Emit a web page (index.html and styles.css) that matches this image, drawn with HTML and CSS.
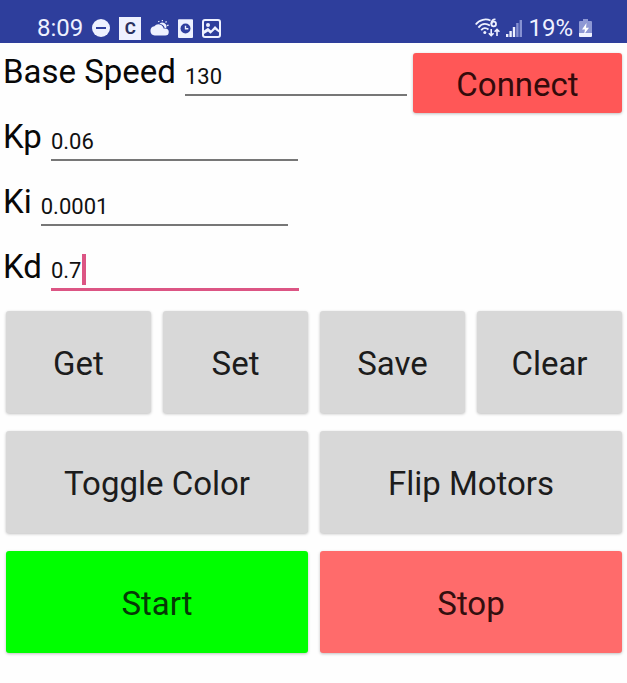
FILE: index.html
```html
<!DOCTYPE html>
<html lang="en">
<head>
<meta charset="utf-8">
<meta name="viewport" content="width=device-width, initial-scale=1">
<title>Motor Controller</title>
<link rel="stylesheet" href="styles.css">
</head>
<body>
<header class="status-bar">
  <div class="status-group">
    <span class="status-text">8:09</span>
    <svg class="icon" width="18" height="18" viewBox="0 0 18 18" aria-hidden="true">
      <circle cx="9" cy="9" r="9" fill="#eef1ff"/>
      <path d="M4 9h10" stroke="#303f9f" stroke-width="2"/>
    </svg>
    <span class="app-badge">C</span>
    <svg class="icon" width="19" height="18" viewBox="0 0 20 18" aria-hidden="true">
      <path d="M5 17a5 5 0 0 1-.4-9.900A5.500 5.500 0 0 1 14.300 9.500H16a3.750 3.750 0 0 1 0 7.500z" fill="#eef1ff"/>
      <path d="M10 4.600a4.200 4.200 0 0 1 7 4.400h-1.500a6.500 6.500 0 0 0-5.500-4.400z" fill="#eef1ff"/>
      <path d="M9.500 2.800 9 1.600M13 2V.5M16.400 3.200l1-1.200M18 6.500l1.500-.5" stroke="#eef1ff" stroke-width="1.300"/>
    </svg>
    <svg class="icon" width="15" height="19" viewBox="0 0 16 20" aria-hidden="true">
      <rect width="16" height="20" rx="1" fill="#eef1ff"/>
      <circle cx="8" cy="10" r="5.300" fill="#303f9f"/>
      <path d="M8 7v3.200h3" fill="none" stroke="#eef1ff" stroke-width="1.500"/>
    </svg>
    <svg class="icon" width="19" height="19" viewBox="0 0 19 19" aria-hidden="true">
      <rect x="1" y="1" width="17" height="17" rx="2" fill="none" stroke="#eef1ff" stroke-width="2"/>
      <circle cx="6" cy="6" r="2" fill="#eef1ff"/>
      <path d="M2 11.500 6 8.800l3 2.700L13 7l4 4v2.500l-4-3-4.500 4.200L6 12.500l-4 2.500z" fill="#eef1ff"/>
    </svg>
  </div>
  <div class="status-group status-right">
    <svg class="icon" width="25" height="20" viewBox="0 0 25 20" aria-hidden="true">
      <g fill="none" stroke="#eef1ff" stroke-width="1.800">
        <path d="M.7 6.500C4.500 1.300 11 .5 15.500 2.500M3.400 9.600C6.500 5.600 11 5 15 7.500M6.200 12.300C8 9.800 11 9.500 13.500 11.500"/>
        <circle cx="18.700" cy="6" r="2.300"/>
        <path d="M20.500 1.500c-2-.5-4.100 1-4.100 4.500"/>
        <path d="M16.200 11v6.500M13.800 15.200l2.400 2.400 2.400-2.400M22 18v-6.500M19.600 13.800l2.400-2.400 2.400 2.400" stroke-width="1.600"/>
      </g>
      <circle cx="9.800" cy="14.500" r="1.500" fill="#eef1ff"/>
    </svg>
    <svg class="icon" width="16" height="17" viewBox="0 0 16 17" aria-hidden="true">
      <path d="M0 14h2.400v3H0zM3.400 11h2.400v6H3.400zM6.800 7h2.400v10H6.800z" fill="#eef1ff"/>
      <path d="M10.200 3h2.400v14h-2.400zM13.600 0H16v17h-2.400z" fill="#8792d2"/>
    </svg>
    <span class="status-text">19%</span>
    <svg class="icon" width="13" height="18" viewBox="0 0 13 18" aria-hidden="true">
      <path d="M4 0h5v2h3a1 1 0 0 1 1 1v11H0V3a1 1 0 0 1 1-1h3z" fill="#8e98d4"/>
      <path d="M0 14h13v3a1 1 0 0 1-1 1H1a1 1 0 0 1-1-1z" fill="#eef1ff"/>
      <path d="M7.500 4 3 10.500h3L5 15.500l5-6.700H7z" fill="#fff"/>
    </svg>
  </div>
</header>
<main>
  <form class="settings">
    <div class="row">
      <label for="base-speed">Base Speed</label>
      <span class="field field-wide"><input id="base-speed" type="text" inputmode="numeric" value="130"></span>
      <button class="connect" type="button">Connect</button>
    </div>
    <div class="row">
      <label for="kp">Kp</label>
      <span class="field"><input id="kp" type="text" inputmode="decimal" value="0.06"></span>
    </div>
    <div class="row">
      <label for="ki">Ki</label>
      <span class="field"><input id="ki" type="text" inputmode="decimal" value="0.0001"></span>
    </div>
    <div class="row">
      <label for="kd">Kd</label>
      <span class="field field-active"><input id="kd" type="text" inputmode="decimal" value="0.7"><span class="caret"></span></span>
    </div>
  </form>
  <div class="actions">
    <button type="button">Get</button>
    <button type="button">Set</button>
    <button type="button">Save</button>
    <button type="button">Clear</button>
    <button class="wide" type="button">Toggle Color</button>
    <button class="wide" type="button">Flip Motors</button>
    <button class="wide start" type="button">Start</button>
    <button class="wide stop" type="button">Stop</button>
  </div>
</main>
</body>
</html>
```
FILE: styles.css
```css
* {
  box-sizing: border-box;
}

body {
  margin: 0;
  background: #fefefe;
  color: #080808;
  font-family: Roboto, sans-serif;
}

.status-bar {
  display: flex;
  justify-content: space-between;
  padding: 14px 35px 1px 37px;
  background: #2e3e9c;
  color: #eef1ff;
}

.status-group {
  display: flex;
  align-items: center;
  gap: 9px;
}

.status-right {
  gap: 6px;
}

.status-text {
  font-size: 24px;
  line-height: 28px;
}

.icon {
  display: block;
  flex: none;
}

.app-badge {
  width: 22px;
  background: #eef1ff;
  color: #2a3160;
  font-size: 17px;
  font-weight: 700;
  line-height: 23px;
  text-align: center;
}

.settings {
  padding: 8px 5px 0 3px;
}

.row {
  display: flex;
  align-items: flex-start;
  height: 65px;
}

label {
  margin-right: 9px;
  font-size: 33px;
  line-height: 41px;
  white-space: nowrap;
}

.field {
  position: relative;
  width: 40%;
  padding-top: 10px;
}

.field-wide {
  flex: 1;
  width: auto;
}

input {
  display: block;
  width: 100%;
  height: 35px;
  padding: 0 0 3px;
  border: 0;
  border-bottom: 2px solid #777;
  outline: 0;
  background: transparent;
  color: #111;
  font: 22px/30px Roboto, sans-serif;
}

.field-active input {
  border-bottom: 3px solid #dc5584;
}

.caret {
  position: absolute;
  top: 8px;
  left: 31px;
  width: 4px;
  height: 31px;
  background: #dc5584;
}

button {
  height: 102px;
  padding: 4px 0 0;
  border: 0;
  border-radius: 3px;
  background: #d8d8d8;
  box-shadow: 0 1px 3px rgba(0, 0, 0, 0.25);
  color: #1c1c1c;
  font: 33px/40px Roboto, sans-serif;
}

.connect {
  width: 209px;
  height: 60px;
  margin: 2px 0 0 6px;
  background: #ff5757;
  color: #330b0b;
}

.actions {
  display: grid;
  grid-template-columns: repeat(4, 1fr);
  gap: 18px 12px;
  padding: 0 5px 30px 6px;
}

.wide {
  grid-column: span 2;
}

.start {
  background: #00ff00;
  color: #063806;
}

.stop {
  background: #ff6b6b;
  color: #330f0f;
}
```
